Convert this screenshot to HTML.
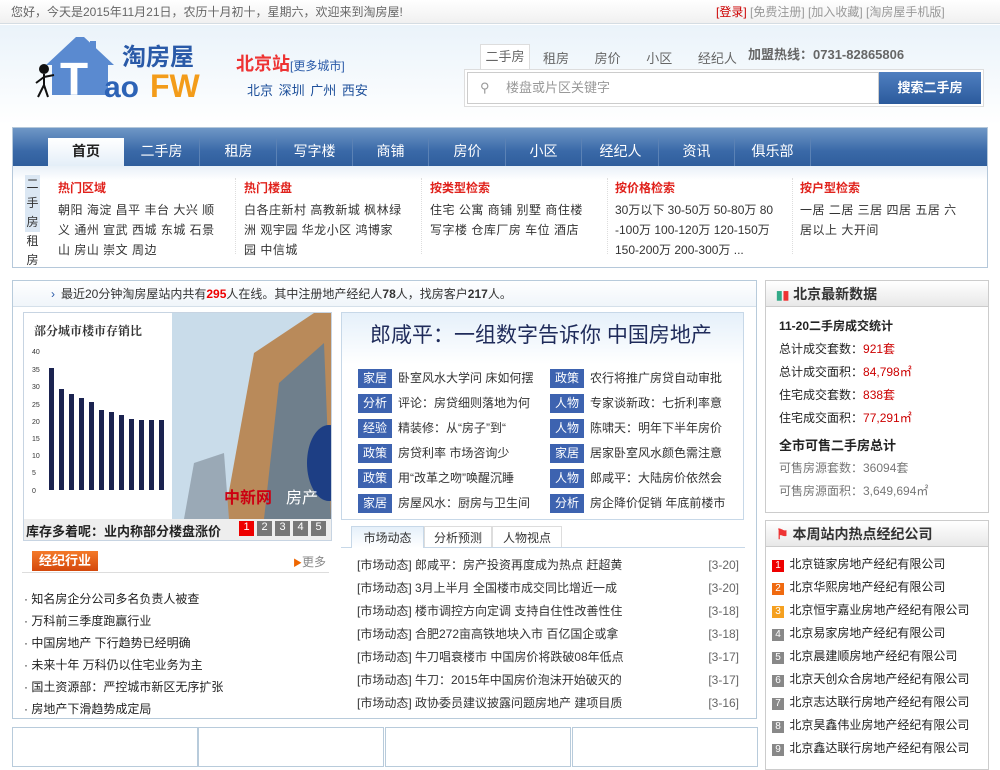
<!DOCTYPE html>
<html><head><meta charset="utf-8">
<style>
*{margin:0;padding:0;box-sizing:border-box}
body{width:1000px;height:761px;overflow:hidden;background:#fff;font-family:"Liberation Sans","Noto Sans CJK SC",sans-serif;font-size:12px;color:#333;position:relative}
.a{position:absolute}
.top{left:0;top:0;width:1000px;height:24px;background:linear-gradient(#fff,#f0f0f0);border-bottom:1px solid #d5dde3;color:#666;line-height:24px}
.hdr{left:0;top:25px;width:1000px;height:100px;background:linear-gradient(#eaf3fa,#fff)}
.nav{left:12px;top:127px;width:976px;height:141px;border:1px solid #b5c8da;background:#fff}
.bar{left:0;top:0;width:974px;height:38px;background:linear-gradient(#6f97c6,#3a69a8 60%,#2f5e9c)}
.tab{position:absolute;top:10px;height:28px;width:76px;text-align:center;color:#fff;font-size:14px;line-height:26px;border-right:1px solid #5b82b5}
.col{position:absolute;top:50px;width:178px;line-height:20px;color:#333;border-right:1px dotted #ddd;height:76px}
.col .t{width:160px;letter-spacing:0.5px}
.col b{color:#e0221c;display:block;font-size:12px;margin-bottom:2px}
.box{border:1px solid #b8cbdb}
.tg{display:inline-block;background:#3d63b0;color:#fff;width:34px;text-align:center;margin-right:6px;height:19px;line-height:19px}
.rt{line-height:23px}
.n{display:inline-block;width:12px;height:12px;background:#888;color:#fff;font-size:10px;text-align:center;line-height:12px;margin-right:2px}
</style></head><body>
<div class="a top"><span style="margin-left:11px">您好，今天是2015年11月21日，农历十月初十，星期六，欢迎来到淘房屋!</span>
<span class="a" style="left:716px;top:0;color:#999"><span style="color:#c00">[登录]</span> [免费注册] [加入收藏] [淘房屋手机版]</span></div>
<div class="a hdr"></div>
<svg class="a" style="left:32px;top:35px" width="180" height="80">
<polygon points="44,2 14,30 20,30 20,60 76,60 76,30 82,30 52,2" fill="#5a8ad0"/>
<polygon points="58,6 64,6 64,18 58,13" fill="#5a8ad0"/>
<text x="28" y="60" font-size="46" font-weight="bold" fill="#fff" font-family="Liberation Sans">T</text>
<text x="72" y="62" font-size="30" font-weight="bold" fill="#2d63b6" font-family="Liberation Sans">ao</text>
<text x="118" y="62" font-size="32" font-weight="bold" fill="#f39c1a" font-family="Liberation Sans">FW</text>
<text x="90" y="30" font-size="24" font-weight="bold" fill="#2a5aa8" font-family="Noto Sans CJK SC">淘房屋</text>
<circle cx="12" cy="34" r="5" fill="#111"/><path d="M12 39 L12 50 M12 50 L6 62 M12 50 L16 62 M12 42 L4 48 M12 42 L22 40" stroke="#111" stroke-width="2" fill="none"/>
</svg>
<div class="a" style="left:236px;top:50px;font-size:18px;color:#e33;font-weight:bold">北京站<span style="font-size:12px;color:#2a5aa8;font-weight:normal">[更多城市]</span></div>
<div class="a" style="left:247px;top:80px;font-size:13px;color:#1d4f9a;word-spacing:2px">北京 深圳 广州 西安</div>
<div class="a" style="left:480px;top:44px;width:50px;height:26px;border:1px solid #ddd;border-bottom:none;background:#fff;text-align:center;line-height:24px;color:#666;font-size:13px">二手房</div>
<div class="a" style="left:543px;top:48px;color:#666;font-size:13px;word-spacing:22px">租房 房价 小区 经纪人</div>
<div class="a" style="left:748px;top:44px;color:#666;font-size:13px;font-weight:bold">加盟热线：0731-82865806</div>
<div class="a" style="left:464px;top:69px;width:520px;height:38px;border:1px solid #ddd;background:#fff"></div>
<div class="a" style="left:467px;top:72px;width:412px;height:32px;border:1px solid #ccc;background:#fff;color:#999;line-height:30px;font-size:13px;padding-left:38px">楼盘或片区关键字</div>
<div class="a" style="left:480px;top:80px;color:#999;font-size:13px">⚲</div>
<div class="a" style="left:879px;top:72px;width:102px;height:32px;background:linear-gradient(#4f7fc0,#2b5a9c);color:#fff;font-weight:bold;font-size:13px;text-align:center;line-height:32px">搜索二手房</div>

<div class="a nav">
<div class="a bar"></div>
<div class="tab" style="left:35px;background:linear-gradient(#fff,#e3eef8);color:#222;font-weight:bold;border:none;height:29px">首页</div>
<div class="tab" style="left:111px">二手房</div><div class="tab" style="left:188px">租房</div><div class="tab" style="left:264px">写字楼</div><div class="tab" style="left:340px">商铺</div><div class="tab" style="left:417px">房价</div><div class="tab" style="left:493px">小区</div><div class="tab" style="left:570px">经纪人</div><div class="tab" style="left:646px">资讯</div><div class="tab" style="left:722px">俱乐部</div>
<div class="a" style="left:0;top:38px;width:974px;height:14px;background:linear-gradient(#e8f0f8,#fff)"></div>
<div class="a" style="left:12px;top:47px;width:15px;line-height:19px;text-align:center;color:#333"><div style="background:#dbe7f3">二<br>手<br>房</div>租<br>房</div>
<div class="col" style="left:45px"><b>热门区域</b><div class="t">朝阳 海淀 昌平 丰台 大兴 顺义 通州 宣武 西城 东城 石景山 房山 崇文 周边</div></div>
<div class="col" style="left:231px"><b>热门楼盘</b><div class="t">白各庄新村 高教新城 枫林绿洲 观宇园 华龙小区 鸿博家园 中信城</div></div>
<div class="col" style="left:417px"><b>按类型检索</b><div class="t">住宅 公寓 商铺 别墅 商住楼 写字楼 仓库厂房 车位 酒店</div></div>
<div class="col" style="left:602px;word-break:break-all"><b>按价格检索</b><div class="t" style="letter-spacing:0">30万以下 30-50万 50-80万 80-100万 100-120万 120-150万 150-200万 200-300万 ...</div></div>
<div class="col" style="left:787px;border:none"><b>按户型检索</b><div class="t">一居 二居 三居 四居 五居 六居以上 大开间</div></div>
</div>

<div class="a box" style="left:12px;top:280px;width:745px;height:439px"></div>
<div class="a" style="left:13px;top:281px;width:743px;height:26px;background:linear-gradient(#fff,#f0f5fa);border-bottom:1px solid #d5e0ea;line-height:26px;padding-left:52px">
<span style="color:#2a5aa8;margin-left:-14px;margin-right:6px">›</span>最近20分钟淘房屋站内共有<b style="color:#e00">295</b>人在线。其中注册地产经纪人<b>78</b>人，找房客户<b>217</b>人。</div>
<div class="a" style="left:23px;top:312px;width:309px;height:229px;border:1px solid #c7d4e2;background:#eee"></div>
<svg class="a" style="left:24px;top:313px" width="307" height="206">
<rect width="148" height="206" fill="#fff"/>
<text x="10" y="22" font-size="12" font-weight="bold" fill="#333" font-family="Noto Serif CJK SC">部分城市楼市存销比</text>
<g font-size="7" fill="#333"><text x="8" y="41">40</text><text x="8" y="59">35</text><text x="8" y="76">30</text><text x="8" y="94">25</text><text x="8" y="111">20</text><text x="8" y="128">15</text><text x="8" y="145">10</text><text x="8" y="162">5</text><text x="8" y="180">0</text></g>
<g fill="#1b2350"><rect x="25" y="55" width="5" height="122"/><rect x="35" y="76" width="5" height="101"/><rect x="45" y="81" width="5" height="96"/><rect x="55" y="85" width="5" height="92"/><rect x="65" y="89" width="5" height="88"/><rect x="75" y="97" width="5" height="80"/><rect x="85" y="99" width="5" height="78"/><rect x="95" y="102" width="5" height="75"/><rect x="105" y="106" width="5" height="71"/><rect x="115" y="107" width="5" height="70"/><rect x="125" y="107" width="5" height="70"/><rect x="135" y="107" width="5" height="70"/></g>
<rect x="148" width="159" height="206" fill="#c9dcea"/>
<polygon points="200,206 230,40 290,0 307,0 307,206" fill="#b98a5a"/>
<polygon points="240,206 255,70 300,30 307,206" fill="#6f7f8c"/>
<polygon points="160,206 170,150 200,140 205,206" fill="#9aa9b6"/>
<ellipse cx="305" cy="150" rx="22" ry="38" fill="#1d3e84"/>
<text x="200" y="190" font-size="16" fill="#c01" font-weight="bold">中新网</text><text x="262" y="190" font-size="16" fill="#fff">房产</text>
</svg>
<div class="a" style="left:26px;top:521px;font-size:13px;font-weight:bold;color:#222">库存多着呢：业内称部分楼盘涨价</div>
<div class="a" style="left:239px;top:521px;display:flex;gap:3px;font-size:11px">
<span style="width:15px;height:15px;background:#e00;color:#fff;text-align:center">1</span><span style="width:15px;height:15px;background:#777;color:#fff;text-align:center">2</span><span style="width:15px;height:15px;background:#777;color:#fff;text-align:center">3</span><span style="width:15px;height:15px;background:#777;color:#fff;text-align:center">4</span><span style="width:15px;height:15px;background:#777;color:#fff;text-align:center">5</span></div>

<div class="a" style="left:341px;top:312px;width:403px;height:208px;border:1px solid #c7d8e8;background:linear-gradient(#e5f0fa,#fff 25%)"></div>
<div class="a" style="left:370px;top:319px;font-size:21px;color:#1f2b5a">郎咸平：一组数字告诉你 中国房地产</div>
<div class="a" style="left:358px;top:366px;line-height:25px">
<div><span class="tg">家居</span>卧室风水大学问 床如何摆</div><div><span class="tg">分析</span>评论：房贷细则落地为何</div><div><span class="tg">经验</span>精装修：从“房子”到“</div><div><span class="tg">政策</span>房贷利率 市场咨询少</div><div><span class="tg">政策</span>用“改革之吻”唤醒沉睡</div><div><span class="tg">家居</span>房屋风水：厨房与卫生间</div></div>
<div class="a" style="left:550px;top:366px;line-height:25px">
<div><span class="tg">政策</span>农行将推广房贷自动审批</div><div><span class="tg">人物</span>专家谈新政：七折利率意</div><div><span class="tg">人物</span>陈啸天：明年下半年房价</div><div><span class="tg">家居</span>居家卧室风水颜色需注意</div><div><span class="tg">人物</span>郎咸平：大陆房价依然会</div><div><span class="tg">分析</span>房企降价促销 年底前楼市</div></div>
<div class="a" style="left:341px;top:547px;width:404px;border-top:1px solid #c7d8e8"></div>
<div class="a" style="left:351px;top:526px;width:73px;height:22px;border:1px solid #c7d8e8;border-bottom:none;background:linear-gradient(#e5f0fa,#fff);text-align:center;line-height:22px">市场动态</div>
<div class="a" style="left:424px;top:526px;width:68px;height:21px;border:1px solid #ddd;border-bottom:none;text-align:center;line-height:22px">分析预测</div>
<div class="a" style="left:492px;top:526px;width:70px;height:21px;border:1px solid #ddd;border-bottom:none;text-align:center;line-height:22px">人物视点</div>
<div class="a" style="left:357px;top:554px;width:382px;line-height:23px">
<div>[市场动态] 郎咸平：房产投资再度成为热点 赶超黄<span style="float:right;color:#666">[3-20]</span></div>
<div>[市场动态] 3月上半月 全国楼市成交同比增近一成<span style="float:right;color:#666">[3-20]</span></div>
<div>[市场动态] 楼市调控方向定调 支持自住性改善性住<span style="float:right;color:#666">[3-18]</span></div>
<div>[市场动态] 合肥272亩高铁地块入市 百亿国企或拿<span style="float:right;color:#666">[3-18]</span></div>
<div>[市场动态] 牛刀唱衰楼市 中国房价将跌破08年低点<span style="float:right;color:#666">[3-17]</span></div>
<div>[市场动态] 牛刀：2015年中国房价泡沫开始破灭的<span style="float:right;color:#666">[3-17]</span></div>
<div>[市场动态] 政协委员建议披露问题房地产 建项目质<span style="float:right;color:#666">[3-16]</span></div></div>
<div class="a" style="left:22px;top:572px;width:307px;border-top:1px solid #ddd"></div>
<div class="a" style="left:32px;top:551px;height:20px;background:linear-gradient(#f47a2a,#d4480c);width:66px;color:#fff;font-weight:bold;font-size:13px;text-align:center;line-height:20px">经纪行业</div>
<div class="a" style="left:293px;top:553px;color:#888"><span style="color:#e60;font-size:9px">▶</span>更多</div>
<div class="a" style="left:24px;top:588px;line-height:22px;color:#222">
<div>· 知名房企分公司多名负责人被查</div><div>· 万科前三季度跑赢行业</div><div>· 中国房地产 下行趋势已经明确</div><div>· 未来十年 万科仍以住宅业务为主</div><div>· 国土资源部：严控城市新区无序扩张</div><div>· 房地产下滑趋势成定局</div></div>

<div class="a box" style="left:765px;top:280px;width:224px;height:233px;border-color:#ccc"></div>
<div class="a" style="left:766px;top:281px;width:222px;height:26px;background:linear-gradient(#fff,#e8e8e8);border-bottom:1px solid #ccc;font-size:14px;font-weight:bold;line-height:26px;padding-left:10px"><span style="color:#3a8;font-size:12px">▮</span><span style="color:#e33;font-size:12px">▮</span> 北京最新数据</div>
<div class="a rt" style="left:779px;top:315px;color:#222">
<div style="font-weight:bold">11-20二手房成交统计</div>
<div>总计成交套数：<span style="color:#c00">921套</span></div><div>总计成交面积：<span style="color:#c00">84,798㎡</span></div><div>住宅成交套数：<span style="color:#c00">838套</span></div><div>住宅成交面积：<span style="color:#c00">77,291㎡</span></div>
<div style="font-weight:bold;font-size:13px;margin-top:4px">全市可售二手房总计</div>
<div style="color:#777">可售房源套数：36094套</div><div style="color:#777">可售房源面积：3,649,694㎡</div></div>
<div class="a box" style="left:765px;top:520px;width:224px;height:250px;border-color:#ccc"></div>
<div class="a" style="left:766px;top:521px;width:222px;height:26px;background:linear-gradient(#fff,#e8e8e8);border-bottom:1px solid #ccc;font-size:14px;font-weight:bold;line-height:26px;padding-left:10px"><span style="color:#e33">⚑</span> 本周站内热点经纪公司</div>
<div class="a" style="left:772px;top:553px;line-height:23px;color:#222;font-size:12px">
<div><span class="n" style="background:#e00">1</span> 北京链家房地产经纪有限公司</div><div><span class="n" style="background:#f06a10">2</span> 北京华熙房地产经纪有限公司</div><div><span class="n" style="background:#f5a020">3</span> 北京恒宇嘉业房地产经纪有限公司</div><div><span class="n">4</span> 北京易家房地产经纪有限公司</div><div><span class="n">5</span> 北京晨建顺房地产经纪有限公司</div><div><span class="n">6</span> 北京天创众合房地产经纪有限公司</div><div><span class="n">7</span> 北京志达联行房地产经纪有限公司</div><div><span class="n">8</span> 北京昊鑫伟业房地产经纪有限公司</div><div><span class="n">9</span> 北京鑫达联行房地产经纪有限公司</div></div>

<div class="a box" style="left:12px;top:727px;width:186px;height:40px"></div>
<div class="a box" style="left:198px;top:727px;width:186px;height:40px"></div>
<div class="a box" style="left:385px;top:727px;width:186px;height:40px"></div>
<div class="a box" style="left:572px;top:727px;width:186px;height:40px"></div>
</body></html>
